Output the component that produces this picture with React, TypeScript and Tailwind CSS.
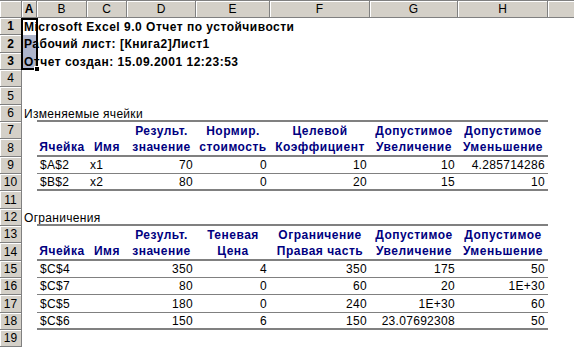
import React from "react";

const COLW = ["w-[15px]", "w-[50px]", "w-[40px]", "w-[69px]", "w-[74px]", "w-[100px]", "w-[88px]", "w-[90px]"];
const LETTERS = ["A", "B", "C", "D", "E", "F", "G", "H"];

const ROWH: Record<number, string> = {
  1: "h-[17px]", 2: "h-[18px]", 3: "h-[17px]", 4: "h-[17px]", 5: "h-[18px]", 6: "h-[17px]",
  7: "h-[17px]", 8: "h-[18px]", 9: "h-[17px]", 10: "h-[17px]", 11: "h-[18px]", 12: "h-[17px]",
  13: "h-[17px]", 14: "h-[18px]", 15: "h-[17px]", 16: "h-[17px]", 17: "h-[18px]", 18: "h-[17px]",
  19: "h-[17px]",
};

type Line = "thin" | "thick" | undefined;
type RowDef =
  | { kind: "title"; text: string }
  | { kind: "label"; text: string; line?: Line }
  | { kind: "empty"; line?: Line }
  | { kind: "head"; cells: string[]; line?: Line }
  | { kind: "data"; cells: string[]; line?: Line };

const ROWS: RowDef[] = [
  { kind: "title", text: "Microsoft Excel 9.0 Отчет по устойчивости" },
  { kind: "title", text: "Рабочий лист: [Книга2]Лист1" },
  { kind: "title", text: "Отчет создан: 15.09.2001 12:23:53" },
  { kind: "empty" },
  { kind: "empty" },
  { kind: "label", text: "Изменяемые ячейки", line: "thick" },
  { kind: "head", cells: ["", "", "Результ.", "Нормир.", "Целевой", "Допустимое", "Допустимое"] },
  { kind: "head", cells: ["Ячейка", "Имя", "значение", "стоимость", "Коэффициент", "Увеличение", "Уменьшение"], line: "thick" },
  { kind: "data", cells: ["$A$2", "x1", "70", "0", "10", "10", "4.285714286"], line: "thin" },
  { kind: "data", cells: ["$B$2", "x2", "80", "0", "20", "15", "10"], line: "thick" },
  { kind: "empty" },
  { kind: "label", text: "Ограничения", line: "thick" },
  { kind: "head", cells: ["", "", "Результ.", "Теневая", "Ограничение", "Допустимое", "Допустимое"] },
  { kind: "head", cells: ["Ячейка", "Имя", "значение", "Цена", "Правая часть", "Увеличение", "Уменьшение"], line: "thick" },
  { kind: "data", cells: ["$C$4", "", "350", "4", "350", "175", "50"], line: "thin" },
  { kind: "data", cells: ["$C$7", "", "80", "0", "60", "20", "1E+30"], line: "thin" },
  { kind: "data", cells: ["$C$5", "", "180", "0", "240", "1E+30", "60"], line: "thin" },
  { kind: "data", cells: ["$C$6", "", "150", "6", "150", "23.07692308", "50"], line: "thick" },
  { kind: "empty" },
];

function lineCls(line: Line) {
  if (line === "thick") return "border-b-2 border-[#808080]";
  if (line === "thin") return "border-b border-[#808080]";
  return "";
}

function RowHeader({ n }: { n: number }) {
  const bold = n <= 3;
  return (
    <div
      className={`w-[22px] shrink-0 h-full bg-[#d4d0c8] border-r border-b border-[#808080] shadow-[inset_1px_1px_0_#ffffff] flex items-center justify-center text-[12px] text-black ${
        bold ? "font-bold" : ""
      }`}
    >
      {n}
    </div>
  );
}

function SheetRow({ n, def }: { n: number; def: RowDef }) {
  const cells: React.ReactNode[] = [];
  if (def.kind === "title") {
    const shaded = n === 2 || n === 3;
    cells.push(
      <div
        key="a"
        className={`${COLW[0]} shrink-0 h-full flex items-center pl-[2px] whitespace-nowrap overflow-visible font-bold text-[12px] tracking-[0.5px] text-black ${
          shaded ? "bg-[#adb5cc]" : ""
        }`}
      >
        {def.text}
      </div>
    );
    for (let i = 1; i < 8; i++) cells.push(<div key={i} className={`${COLW[i]} shrink-0 h-full`} />);
  } else if (def.kind === "label") {
    cells.push(
      <div
        key="a"
        className={`${COLW[0]} shrink-0 h-full flex items-center pl-[2px] whitespace-nowrap overflow-visible text-[12px] tracking-[0.3px] text-black`}
      >
        {def.text}
      </div>
    );
    for (let i = 1; i < 8; i++)
      cells.push(<div key={i} className={`${COLW[i]} shrink-0 h-full ${lineCls(def.line)}`} />);
  } else if (def.kind === "empty") {
    cells.push(<div key="a" className={`${COLW[0]} shrink-0 h-full`} />);
    for (let i = 1; i < 8; i++)
      cells.push(<div key={i} className={`${COLW[i]} shrink-0 h-full ${lineCls(def.line)}`} />);
  } else if (def.kind === "head") {
    cells.push(<div key="a" className={`${COLW[0]} shrink-0 h-full`} />);
    def.cells.forEach((t, j) => {
      const i = j + 1;
      cells.push(
        <div
          key={i}
          className={`${COLW[i]} shrink-0 h-full flex items-center justify-center whitespace-nowrap text-[12px] font-bold tracking-[0.5px] text-[#000080] ${lineCls(
            def.line
          )}`}
        >
          {t}
        </div>
      );
    });
  } else {
    cells.push(<div key="a" className={`${COLW[0]} shrink-0 h-full`} />);
    def.cells.forEach((t, j) => {
      const i = j + 1;
      const left = i <= 2;
      cells.push(
        <div
          key={i}
          className={`${COLW[i]} shrink-0 h-full flex items-center whitespace-nowrap text-[12px] tracking-[0.3px] text-black ${
            left ? "justify-start pl-[3px]" : "justify-end pr-[3px]"
          } ${lineCls(def.line)}`}
        >
          {t}
        </div>
      );
    });
  }
  return (
    <div className={`flex ${ROWH[n]}`}>
      <RowHeader n={n} />
      {cells}
      <div className="flex-1 h-full" />
    </div>
  );
}

export default function App() {
  return (
    <div className="relative w-[574px] h-[348px] overflow-hidden bg-white font-['Liberation_Sans',Arial,sans-serif] leading-none">
      <div className="flex h-[18px] bg-[#d4d0c8] border-t border-b border-[#808080]">
        <div className="w-[22px] shrink-0 h-full border-r border-[#808080] shadow-[inset_1px_1px_0_#ffffff]" />
        {LETTERS.map((l, i) => (
          <div
            key={l}
            className={`${COLW[i]} shrink-0 h-full border-r border-[#808080] shadow-[inset_1px_1px_0_#ffffff] flex items-center justify-center text-[12px] text-black ${
              i === 0 ? "font-bold" : ""
            }`}
          >
            {l}
          </div>
        ))}
        <div className="flex-1 h-full shadow-[inset_1px_1px_0_#ffffff]" />
      </div>
      {ROWS.map((r, idx) => (
        <SheetRow key={idx} n={idx + 1} def={r} />
      ))}
      <div className="absolute left-[21px] top-[18px] w-[17px] h-[52px] border-2 border-black pointer-events-none" />
      <div className="absolute left-[34px] top-[66px] w-[6px] h-[6px] bg-black border border-white pointer-events-none" />
    </div>
  );
}
